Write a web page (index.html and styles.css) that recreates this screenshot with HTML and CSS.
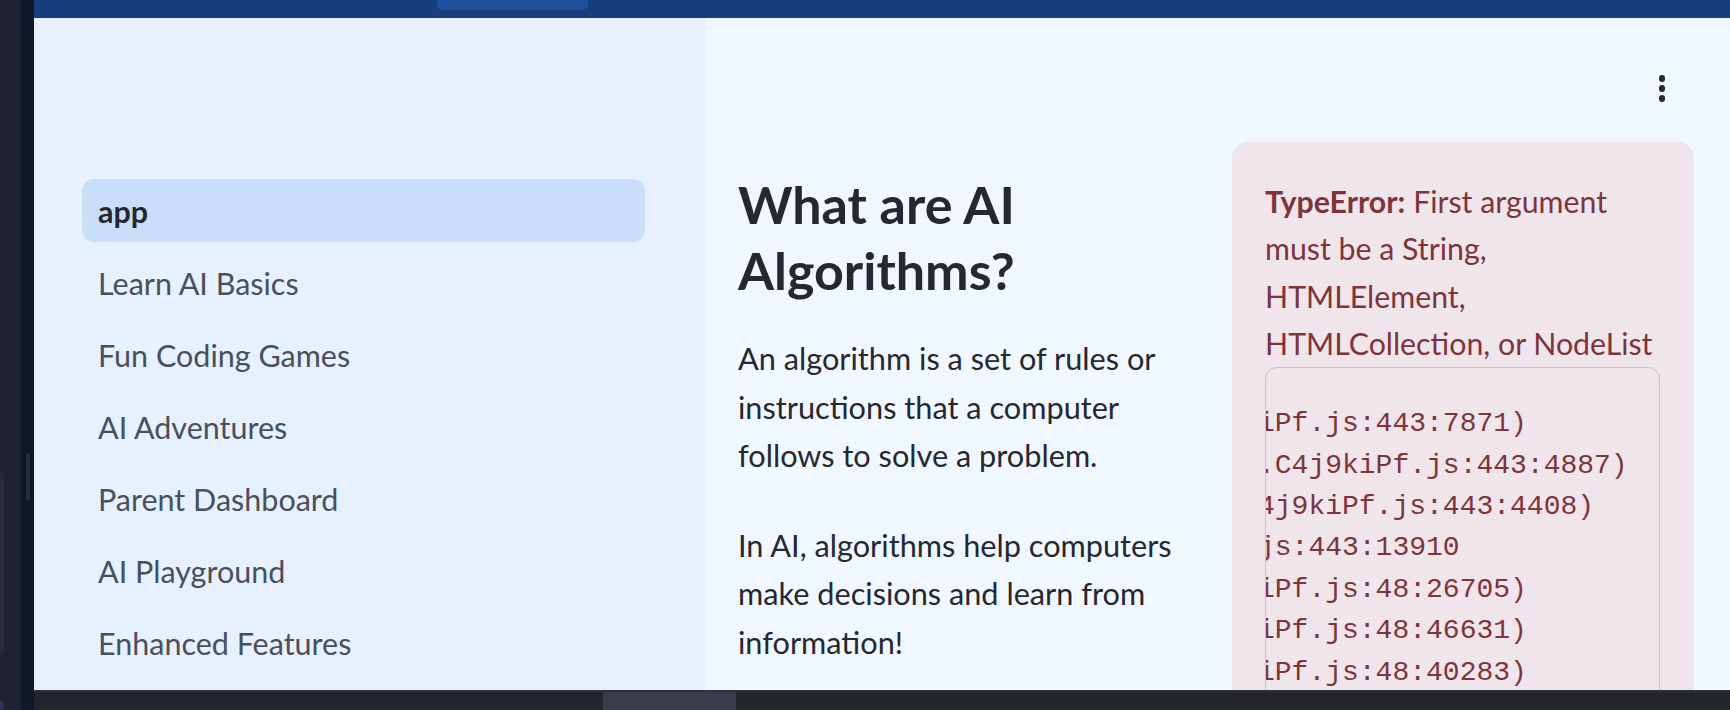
FILE: index.html
```html
<!DOCTYPE html>
<html lang="en">
<head>
<meta charset="utf-8">
<title>AI Algorithms</title>
<link rel="stylesheet" href="styles.css">
</head>
<body>
<div class="screen">
  <div class="desk"><div class="desk-pill"></div><div class="desk-dot"></div></div>
  <div class="gutter"><div class="thumb"></div></div>
  <div class="app">
    <div class="topbar"><div class="tab"></div></div>
    <div class="content">
      <nav class="sidebar">
        <a class="nav-item active">app</a>
        <a class="nav-item">Learn AI Basics</a>
        <a class="nav-item">Fun Coding Games</a>
        <a class="nav-item">AI Adventures</a>
        <a class="nav-item">Parent Dashboard</a>
        <a class="nav-item">AI Playground</a>
        <a class="nav-item">Enhanced Features</a>
      </nav>
      <main class="main">
        <div class="toolbar">
          <button class="menu" aria-label="Main menu"><span class="dot"></span><span class="dot"></span><span class="dot"></span></button>
        </div>
        <div class="columns">
          <div class="col-text">
            <h2 class="title">What are AI Algorithms?</h2>
            <p class="para">An algorithm is a set of rules or instructions that a computer follows to solve a problem.</p>
            <p class="para">In AI, algorithms help computers make decisions and learn from information!</p>
          </div>
          <div class="alert">
            <p class="alert-msg"><strong>TypeError:</strong> First argument must be a String, HTMLElement, HTMLCollection, or NodeList</p>
            <div class="trace">
<pre class="trace-text">iPf.js:443:7871)
.C4j9kiPf.js:443:4887)
4j9kiPf.js:443:4408)
js:443:13910
iPf.js:48:26705)
iPf.js:48:46631)
iPf.js:48:40283)
iPf.js:48:40102)</pre>
            </div>
          </div>
        </div>
      </main>
    </div>
    <div class="statusbar"><div class="status-seg"></div></div>
  </div>
</div>
</body>
</html>
```
FILE: styles.css
```css
* { box-sizing: border-box; }
html, body { margin: 0; padding: 0; }
body {
  width: 1730px;
  height: 710px;
  overflow: hidden;
  font-family: "Lato", "Liberation Sans", sans-serif;
  background: #1e2233;
}
.screen {
  display: flex;
  width: 1730px;
  height: 710px;
}
.desk {
  position: relative;
  width: 21px;
  flex: none;
  background: #1e2233;
}
.desk-pill {
  position: absolute;
  left: -6px;
  top: 471px;
  width: 10px;
  height: 185px;
  border-radius: 5px;
  background: #272b40;
}
.desk-dot {
  position: absolute;
  left: -8px;
  top: 700px;
  width: 12px;
  height: 12px;
  border-radius: 50%;
  background: #352f5a;
}
.gutter {
  position: relative;
  width: 13px;
  flex: none;
  background: #10172a;
}
.thumb {
  position: absolute;
  left: 5px;
  top: 453px;
  width: 4px;
  height: 48px;
  border-radius: 2px;
  background: #272c41;
}
.app {
  flex: 1;
  display: flex;
  flex-direction: column;
  min-width: 0;
}
.topbar {
  height: 18px;
  flex: none;
  background: #183f7d;
  padding-left: 403px;
}
.tab {
  width: 151px;
  height: 10px;
  background: #1f4f9c;
  border-radius: 0 0 6px 6px;
}
.content {
  flex: 1;
  display: flex;
  min-height: 0;
  overflow: hidden;
}
.sidebar {
  width: 672px;
  flex: none;
  background: #e7f1fe;
  padding: 161px 61px 0 48px;
  display: flex;
  flex-direction: column;
  gap: 9px;
}
.nav-item {
  display: flex;
  align-items: center;
  height: 63px;
  padding-left: 16px;
  border-radius: 12px;
  font-size: 30.5px;
  color: #4a4f5c;
  text-decoration: none;
}
.nav-item.active {
  background: #c9dff9;
  color: #262730;
  font-weight: 700;
}
.main {
  flex: 1;
  background: #f0f7ff;
  padding: 0 36px 0 32px;
  display: flex;
  flex-direction: column;
  min-width: 0;
  overflow: hidden;
}
.toolbar {
  height: 124px;
  flex: none;
  display: flex;
  justify-content: flex-end;
  align-items: flex-start;
}
.menu {
  margin-top: 57px;
  width: 64px;
  height: 30px;
  padding: 0;
  border: 0;
  background: transparent;
  display: flex;
  flex-direction: column;
  align-items: center;
  gap: 3.5px;
}
.dot {
  width: 6.5px;
  height: 6.5px;
  border-radius: 50%;
  background: #262730;
}
.columns {
  display: grid;
  grid-template-columns: 462px 462px;
  column-gap: 32px;
  align-items: start;
}
.col-text {
  color: #262730;
  padding-top: 29px;
  min-width: 0;
}
.title {
  margin: 0 0 32px;
  font-size: 52px;
  line-height: 66px;
  font-weight: 700;
  color: #262730;
}
.para {
  margin: 0 0 41px;
  font-size: 30.7px;
  line-height: 48.5px;
}
.alert {
  background: #f1e5ec;
  border-radius: 16px;
  padding: 36px 34px 0 33px;
  color: #7d353b;
  height: 600px;
  min-width: 0;
}
.alert-msg {
  margin: 0;
  font-size: 30.3px;
  line-height: 47.3px;
}
.alert-msg strong { font-weight: 700; }
.trace {
  border: 1.5px solid #cbc1c9;
  border-radius: 12px;
  overflow: hidden;
  padding: 35px 0 20px 0;
  height: 500px;
}
.trace-text {
  margin: 0 0 0 -8px;
  font-family: "Liberation Mono", "DejaVu Sans Mono", monospace;
  font-size: 28px;
  line-height: 41.4px;
  color: #7d353b;
  white-space: pre;
}
.statusbar {
  height: 20px;
  flex: none;
  background: #222529;
  border-top: 2px solid #2e3039;
  padding-left: 569px;
}
.status-seg {
  width: 133px;
  height: 18px;
  background: #393d4a;
}
```
